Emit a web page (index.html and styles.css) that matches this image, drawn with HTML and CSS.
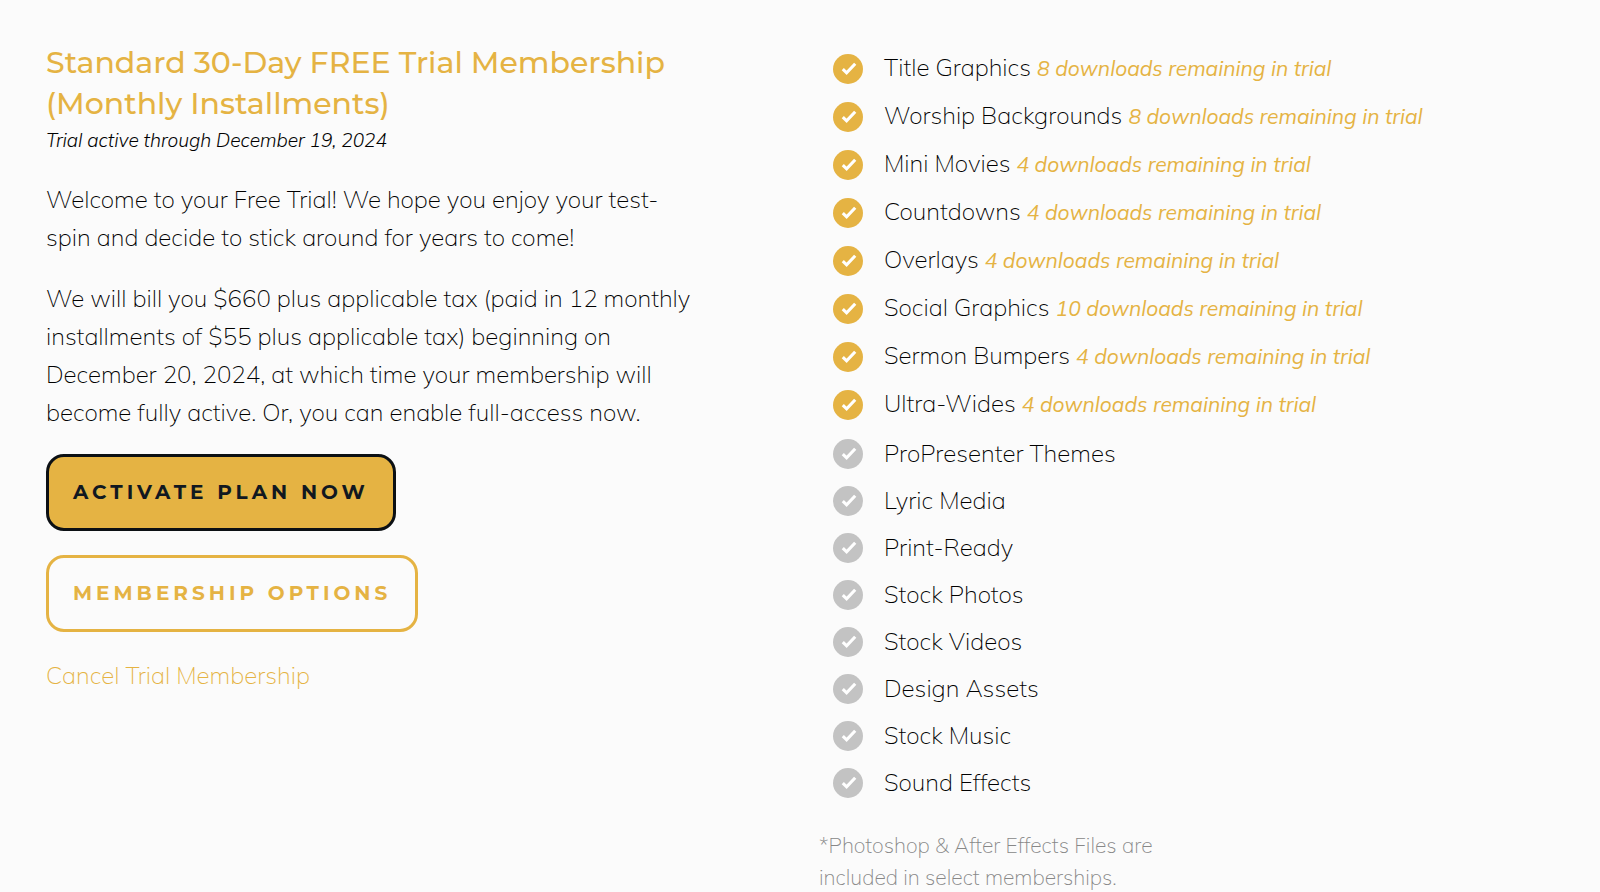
FILE: index.html
```html
<!DOCTYPE html>
<html lang="en">
<head>
  <meta charset="UTF-8">
  <meta name="viewport" content="width=device-width, initial-scale=1.0">
  <title>Trial Membership</title>
  <link rel="stylesheet" href="styles.css">
</head>
<body>
  <svg class="sprite" aria-hidden="true">
    <symbol id="check" viewBox="0 0 30 30">
      <circle cx="15" cy="15" r="15" fill="currentColor"/>
      <path d="M9.8 15.2l3.8 3.6 8.6-9" fill="none" stroke="#fff" stroke-width="3.1"/>
    </symbol>
  </svg>

  <main class="membership">
    <section class="plan">
      <h1>Standard 30-Day FREE Trial Membership (Monthly Installments)</h1>
      <p class="trial-date">Trial active through December 19, 2024</p>
      <p>Welcome to your Free Trial! We hope you enjoy your test-<br>spin and decide to stick around for years to come!</p>
      <p>We will bill you $660 plus applicable tax (paid in 12 monthly<br>installments of $55 plus applicable tax) beginning on<br>December 20, 2024, at which time your membership will<br>become fully active. Or, you can enable full-access now.</p>
      <div class="actions">
        <button type="button" class="btn btn-primary">Activate Plan Now</button>
        <button type="button" class="btn">Membership Options</button>
        <a href="#cancel">Cancel Trial Membership</a>
      </div>
    </section>

    <section class="features">
      <ul class="active">
        <li><svg><use href="#check"/></svg><span>Title Graphics <em>8 downloads remaining in trial</em></span></li>
        <li><svg><use href="#check"/></svg><span>Worship Backgrounds <em>8 downloads remaining in trial</em></span></li>
        <li><svg><use href="#check"/></svg><span>Mini Movies <em>4 downloads remaining in trial</em></span></li>
        <li><svg><use href="#check"/></svg><span>Countdowns <em>4 downloads remaining in trial</em></span></li>
        <li><svg><use href="#check"/></svg><span>Overlays <em>4 downloads remaining in trial</em></span></li>
        <li><svg><use href="#check"/></svg><span>Social Graphics <em>10 downloads remaining in trial</em></span></li>
        <li><svg><use href="#check"/></svg><span>Sermon Bumpers <em>4 downloads remaining in trial</em></span></li>
        <li><svg><use href="#check"/></svg><span>Ultra-Wides <em>4 downloads remaining in trial</em></span></li>
      </ul>
      <ul>
        <li><svg><use href="#check"/></svg><span>ProPresenter Themes</span></li>
        <li><svg><use href="#check"/></svg><span>Lyric Media</span></li>
        <li><svg><use href="#check"/></svg><span>Print-Ready</span></li>
        <li><svg><use href="#check"/></svg><span>Stock Photos</span></li>
        <li><svg><use href="#check"/></svg><span>Stock Videos</span></li>
        <li><svg><use href="#check"/></svg><span>Design Assets</span></li>
        <li><svg><use href="#check"/></svg><span>Stock Music</span></li>
        <li><svg><use href="#check"/></svg><span>Sound Effects</span></li>
      </ul>
      <p class="note">*Photoshop &amp; After Effects Files are<br>included in select memberships.</p>
    </section>
  </main>
</body>
</html>
```
FILE: styles.css
```css
* {
  box-sizing: border-box;
  margin: 0;
  padding: 0;
}

body {
  background-color: #fbfbfb;
  color: #000;
  font-family: Mulish, Lato, sans-serif;
  font-size: 24px;
  font-weight: 200;
  line-height: 38px;
}

.sprite {
  display: none;
}

.membership {
  display: grid;
  grid-template-columns: 1fr 1fr;
  gap: 38px;
  padding: 42px 46px 0;
}

.plan p {
  margin-bottom: 23px;
}

h1 {
  color: #e5b343;
  font-family: Montserrat, Inter, sans-serif;
  font-size: 30px;
  font-weight: 500;
  line-height: 41px;
  max-width: 660px;
}

.plan .trial-date {
  font-size: 19px;
  font-style: italic;
  font-weight: 300;
  line-height: 33px;
}

.actions {
  display: flex;
  flex-direction: column;
  align-items: flex-start;
  gap: 24px;
}

.btn {
  padding: 24px;
  background-color: transparent;
  border: 3px solid #e5b343;
  border-radius: 18px;
  color: #e5b343;
  font-family: Montserrat, Inter, sans-serif;
  font-size: 20px;
  font-weight: 700;
  letter-spacing: 4px;
  line-height: 23px;
  text-transform: uppercase;
}

.btn-primary {
  background-color: #e5b343;
  border-color: #0c1014;
  color: #111820;
}

a {
  color: #e5b343;
  text-decoration: none;
}

.features {
  padding-top: 1px;
}

.features li {
  display: flex;
  align-items: center;
  gap: 21px;
  height: 47px;
  padding-left: 14px;
}

.features .active {
  margin-bottom: 2px;
}

.features .active li {
  height: 48px;
}

.features svg {
  width: 30px;
  height: 30px;
  margin-top: 3px;
  color: #c3c3c3;
}

.features .active svg {
  color: #e5b343;
}

.features em {
  color: #e5b343;
  font-size: 21px;
  font-weight: 400;
}

.note {
  margin-top: 24px;
  color: #888;
  font-size: 21px;
  line-height: 32px;
}
```
